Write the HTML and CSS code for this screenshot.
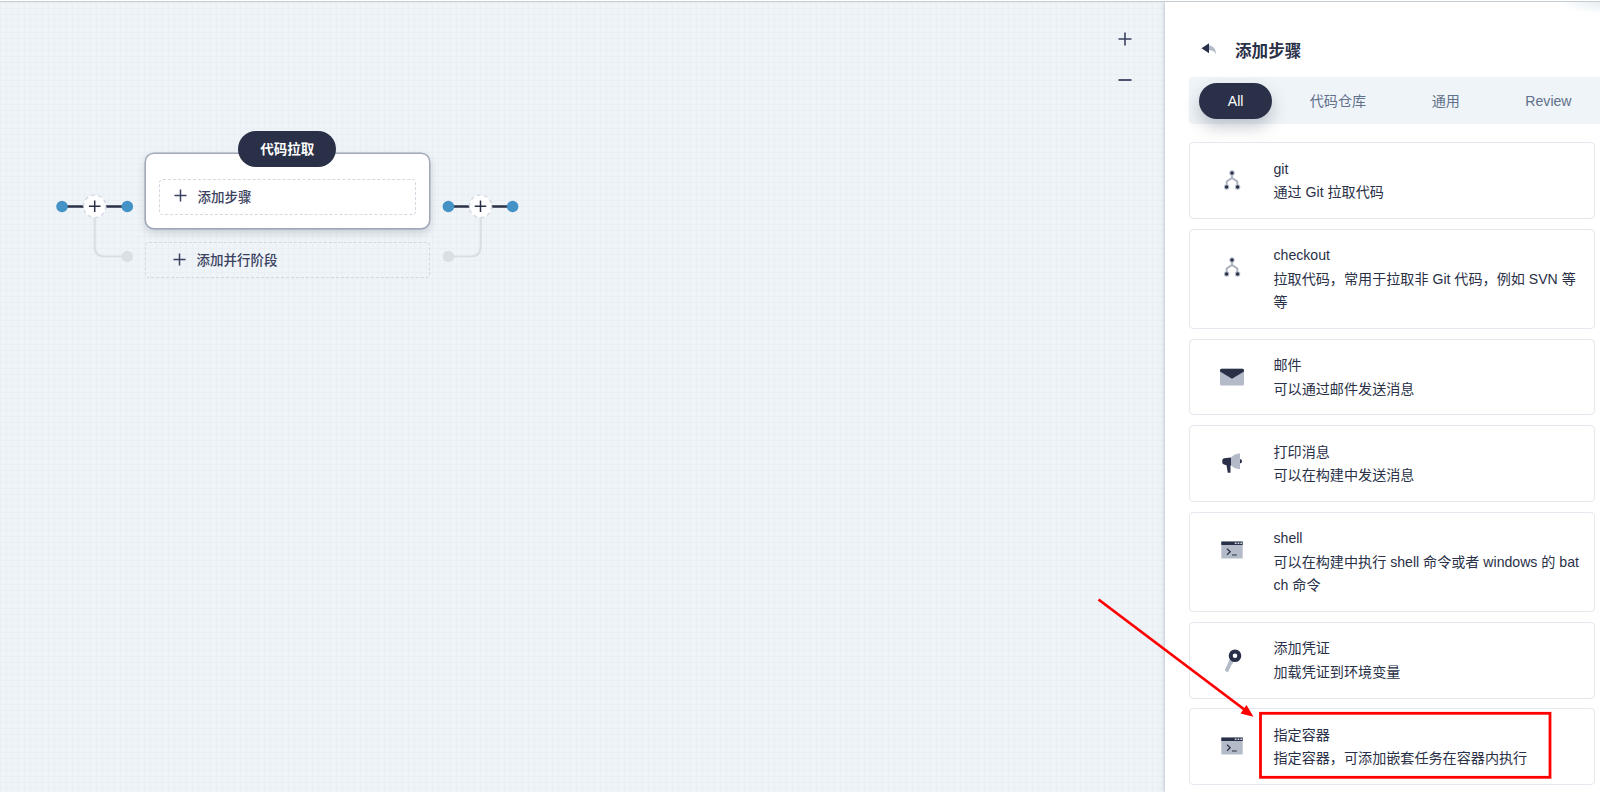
FILE: index.html
```html
<!DOCTYPE html>
<html lang="zh-CN">
<head>
    <meta charset="UTF-8">
    <meta name="viewport" content="width=device-width, initial-scale=1.0">
    <title>添加步骤</title>
    <link rel="stylesheet" href="styles.css">
</head>
<body>

    <!-- shared icons -->
    <svg class="sprite" width="0" height="0">
        <symbol id="plus" viewBox="0 0 14 14">
            <path d="M7 .5v13M.5 7h13" fill="none" stroke="currentColor" stroke-width="1.6"/>
        </symbol>
        <symbol id="branch" viewBox="0 0 24 24">
            <path d="M12 5v5M6.700 18v-4.500l5.300-3.500 5.300 3.500v4.500" fill="none" stroke="#a9b1c0" stroke-width="1.900"/>
            <circle cx="12" cy="5" r="2.700" fill="#b9c0cd"/>
            <circle cx="6.600" cy="19" r="2.700" fill="#b9c0cd"/>
            <circle cx="17.600" cy="19" r="2.700" fill="#b9c0cd"/>
            <circle cx="12" cy="5" r="1.700" fill="#293047"/>
            <circle cx="6.600" cy="19" r="1.700" fill="#293047"/>
            <circle cx="17.600" cy="19" r="1.700" fill="#293047"/>
        </symbol>
        <symbol id="terminal" viewBox="0 0 24 24">
            <path d="M1.300 3.500h21.400v17H1.300z" fill="#b4bbc8"/>
            <path d="M1.300 3.500h21.400v3.500H1.300z" fill="#293047"/>
            <path d="M14.800 4.500h1.700v1.500h-1.700zM17.600 4.500h1.700v1.500h-1.700zM20.400 4.500h1.700v1.500h-1.700z" fill="#d5dae2"/>
            <path d="M7 10.800l3.200 3-3.200 3M12 17h4.800" fill="none" stroke="#293047" stroke-width="1.200"/>
        </symbol>
    </svg>

    <div class="page">
        <main class="canvas">
            <div class="pipeline">
                <svg class="connector" width="80" height="72" viewBox="0 0 80 72">
                    <path d="M39.700 20v28.500q0 10 10 10H68" fill="none" stroke="#dadfe6" stroke-width="2.200"/>
                    <circle cx="72.300" cy="58.500" r="5.700" fill="#dadfe6"/>
                    <path d="M7 8.500h65" stroke="#293047" stroke-width="2.600"/>
                    <circle cx="7" cy="8.500" r="5.800" fill="#4592c6"/>
                    <circle cx="72.300" cy="8.500" r="5.800" fill="#4592c6"/>
                    <circle cx="39.700" cy="8.300" r="11.200" fill="#fff" stroke="#d5dbe4" stroke-width="1.500" stroke-dasharray="3.500 3.500"/>
                    <path d="M39.700 2.500v11.600M33.900 8.300h11.600" stroke="#293047" stroke-width="1.500"/>
                </svg>

                <div class="stages">
                    <div class="stage">
                        <span class="stage-name">代码拉取</span>
                        <div class="add-step">
                            <svg width="13" height="13"><use href="#plus"/></svg>
                            <span>添加步骤</span>
                        </div>
                    </div>
                    <div class="add-stage">
                        <svg width="13" height="13"><use href="#plus"/></svg>
                        <span>添加并行阶段</span>
                    </div>
                </div>

                <svg class="connector" width="80" height="72" viewBox="0 0 80 72">
                    <path d="M39.700 20v28.500q0 10-10 10H7" fill="none" stroke="#dadfe6" stroke-width="2.200"/>
                    <circle cx="7.400" cy="58.500" r="5.700" fill="#dadfe6"/>
                    <path d="M7 8.500h65" stroke="#293047" stroke-width="2.600"/>
                    <circle cx="7.400" cy="8.500" r="5.800" fill="#4592c6"/>
                    <circle cx="71.600" cy="8.500" r="5.800" fill="#4592c6"/>
                    <circle cx="39.500" cy="8.300" r="11.200" fill="#fff" stroke="#d5dbe4" stroke-width="1.500" stroke-dasharray="3.500 3.500"/>
                    <path d="M39.500 2.500v11.600M33.700 8.300h11.600" stroke="#293047" stroke-width="1.500"/>
                </svg>
            </div>

            <div class="zoom">
                <svg width="14" height="14"><use href="#plus"/></svg>
                <svg width="14" height="14" viewBox="0 0 14 14"><path d="M.5 7h13" stroke="currentColor" stroke-width="1.800"/></svg>
            </div>
        </main>

        <aside class="panel">
            <header class="panel-header">
                <svg width="16" height="12" viewBox="0 0 16 12">
                    <path d="M7.500 2.500c4 0 7.500 2.500 7.500 9-1.500-3.500-3.500-4.500-7.500-4.300z" fill="#b4bbc8"/>
                    <path d="M.5 5.200L8 .2v10z" fill="#293047"/>
                </svg>
                <h2>添加步骤</h2>
            </header>

            <nav class="tabs">
                <a class="tab active">All</a>
                <a class="tab">代码仓库</a>
                <a class="tab">通用</a>
                <a class="tab">Review</a>
            </nav>

            <div class="steps">
                <div class="step">
                    <svg class="icon" viewBox="0 0 24 24"><use href="#branch"/></svg>
                    <div class="step-text">
                        <p>git</p>
                        <p>通过 Git 拉取代码</p>
                    </div>
                </div>
                <div class="step">
                    <svg class="icon" viewBox="0 0 24 24"><use href="#branch"/></svg>
                    <div class="step-text">
                        <p>checkout</p>
                        <p>拉取代码，常用于拉取非 Git 代码，例如 SVN 等等</p>
                    </div>
                </div>
                <div class="step">
                    <svg class="icon" viewBox="0 0 24 24">
                        <rect x="0" y="3.800" width="24" height="16.800" rx="1.500" fill="#b4bbc8"/>
                        <path d="M0 5.500Q0 3.800 1.500 3.800h21q1.500 0 1.500 1.700v1L12 13.800 0 6.500z" fill="#293047"/>
                    </svg>
                    <div class="step-text">
                        <p>邮件</p>
                        <p>可以通过邮件发送消息</p>
                    </div>
                </div>
                <div class="step">
                    <svg class="icon" viewBox="0 0 24 24">
                        <path d="M11 6.500Q14 3 18 2.500h2v15.500h-2Q14 17.500 11 14.500z" fill="#b4bbc8"/>
                        <path d="M11 6.500v8h-.5v7.300H7.800L6.500 14.300 4 13.500q-1.700-.5-1.700-2V9.500q0-1.800 1.700-2.200z" fill="#293047"/>
                        <path d="M20 8q2 .3 2 2.200t-2 2.200z" fill="#293047"/>
                    </svg>
                    <div class="step-text">
                        <p>打印消息</p>
                        <p>可以在构建中发送消息</p>
                    </div>
                </div>
                <div class="step">
                    <svg class="icon" viewBox="0 0 24 24"><use href="#terminal"/></svg>
                    <div class="step-text">
                        <p>shell</p>
                        <p>可以在构建中执行 shell 命令或者 windows 的 batch 命令</p>
                    </div>
                </div>
                <div class="step">
                    <svg class="icon" viewBox="0 0 24 24">
                        <path d="M10 10.500l4 3-3.500 5-.2 2-1.300.7-.4 2.300-1.800.5-2-1.800z" fill="#b4bbc8"/>
                        <circle cx="15" cy="7.700" r="4.300" fill="none" stroke="#293047" stroke-width="4"/>
                    </svg>
                    <div class="step-text">
                        <p>添加凭证</p>
                        <p>加载凭证到环境变量</p>
                    </div>
                </div>
                <div class="step">
                    <svg class="icon" viewBox="0 0 24 24"><use href="#terminal"/></svg>
                    <div class="step-text">
                        <p>指定容器</p>
                        <p>指定容器，可添加嵌套任务在容器内执行</p>
                    </div>
                </div>
            </div>
        </aside>
    </div>

    <!-- red arrow and frame over the container step -->
    <svg class="marker" width="1600" height="792" viewBox="0 0 1600 792">
        <path d="M1098.500 599.500L1245 710" stroke="#f00" stroke-width="2.800"/>
        <path d="M1253.500 716.800l-13-3.300 6-8.600z" fill="#f00"/>
        <rect x="1260.500" y="713.300" width="289.500" height="64" fill="none" stroke="#f00" stroke-width="2.800"/>
    </svg>

</body>
</html>
```
FILE: styles.css
```css
* {
    box-sizing: border-box;
}

body {
    margin: 0;
    height: 792px;
    overflow: hidden;
    font-family: "Liberation Sans", "Noto Sans CJK SC", sans-serif;
    font-size: 14.100px;
    color: #293047;
    background-color: #fff;
}

svg {
    display: block;
    flex: none;
}

.sprite {
    position: absolute;
}

.page {
    display: flex;
    height: 792px;
    border-top: 1px solid #fff;
    box-shadow: inset 0 1px 0 #c5ccd1;
}

/* canvas */

.canvas {
    flex: 1;
    display: flex;
    justify-content: space-between;
    align-items: flex-start;
    margin-top: 1px;
    background-color: #eff4f8;
    background-image:
        linear-gradient(to right, #e9eff3 1px, transparent 1px),
        linear-gradient(to bottom, #e9eff3 1px, transparent 1px);
    background-size: 6px 6px;
}

.pipeline {
    display: flex;
    padding: 151px 0 0 55px;
}

.connector {
    margin-top: 45.400px;
    overflow: visible;
}

.stages {
    width: 285.500px;
    margin: 0 10.500px 0 9.500px;
}

.stage {
    display: flex;
    flex-direction: column;
    align-items: center;
    height: 76px;
    padding: 0 13px;
    background-color: #fff;
    border: 1.500px solid #a2aaba;
    border-radius: 9px;
    box-shadow: 0 4px 8px rgba(41, 48, 71, 0.18), 0 0 0 0.500px #a2aaba;
}

.stage-name {
    height: 36px;
    margin-top: -23px;
    padding: 0 22px;
    line-height: 37px;
    font-size: 13.500px;
    font-weight: 700;
    color: #fff;
    background-color: #293047;
    border-radius: 18px;
}

.add-step,
.add-stage {
    display: flex;
    align-items: center;
    gap: 11px;
    height: 36px;
    font-size: 13.500px;
    font-weight: 500;
    color: #3a4260;
    border: 1px dashed #d2d9e0;
    border-radius: 4px;
}

.add-step {
    width: 100%;
    margin-top: 12px;
    padding: 0 0 3px 14px;
}

.add-stage {
    margin-top: 13px;
    padding: 0 0 2px 27px;
}

.zoom {
    display: flex;
    flex-direction: column;
    gap: 27px;
    padding: 30px 33px 0 0;
    color: #3a4260;
}

/* side panel */

.panel {
    position: relative;
    width: 435px;
    margin-top: 1px;
    padding-left: 24px;
    background: radial-gradient(ellipse 40px 12px at 100% 0, #e6edf2, #fff) #fff;
    box-shadow: -1px 0 4px rgba(41, 48, 71, 0.2);
    clip-path: inset(0 0 0 -8px);
}

.panel-header {
    display: flex;
    align-items: center;
    gap: 18px;
    height: 75px;
    padding: 21px 0 0 12px;
}

.panel-header svg {
    margin-top: -3px;
}

.panel-header h2 {
    margin: 0;
    font-size: 16.600px;
    font-weight: 700;
}

.tabs {
    display: flex;
    align-items: center;
    gap: 9.500px;
    height: 47px;
    padding: 0 10px;
    background-color: #eff4f8;
    border-radius: 4px 0 0 4px;
}

.tab {
    height: 36px;
    padding: 0 28px;
    line-height: 36px;
    color: #5f708a;
    border-radius: 18px;
    white-space: nowrap;
}

.tab.active {
    padding: 0 28.800px;
    color: #fff;
    background-color: #293047;
    box-shadow: 0 8px 16px rgba(41, 48, 71, 0.25);
}

.steps {
    display: flex;
    flex-direction: column;
    gap: 9.800px;
    padding: 18px 5px 0 0;
}

.step {
    display: flex;
    padding: 14.500px 13px 13.500px 30px;
    border: 1px solid #e3e9ef;
    border-radius: 4px;
}

.step .icon {
    width: 24px;
    height: 24px;
    margin: 10.500px 29.500px 0 0;
}

.step-text p {
    margin: 0;
    line-height: 23.400px;
    word-break: break-all;
}

.marker {
    position: absolute;
    top: 0;
    left: 0;
}
```
